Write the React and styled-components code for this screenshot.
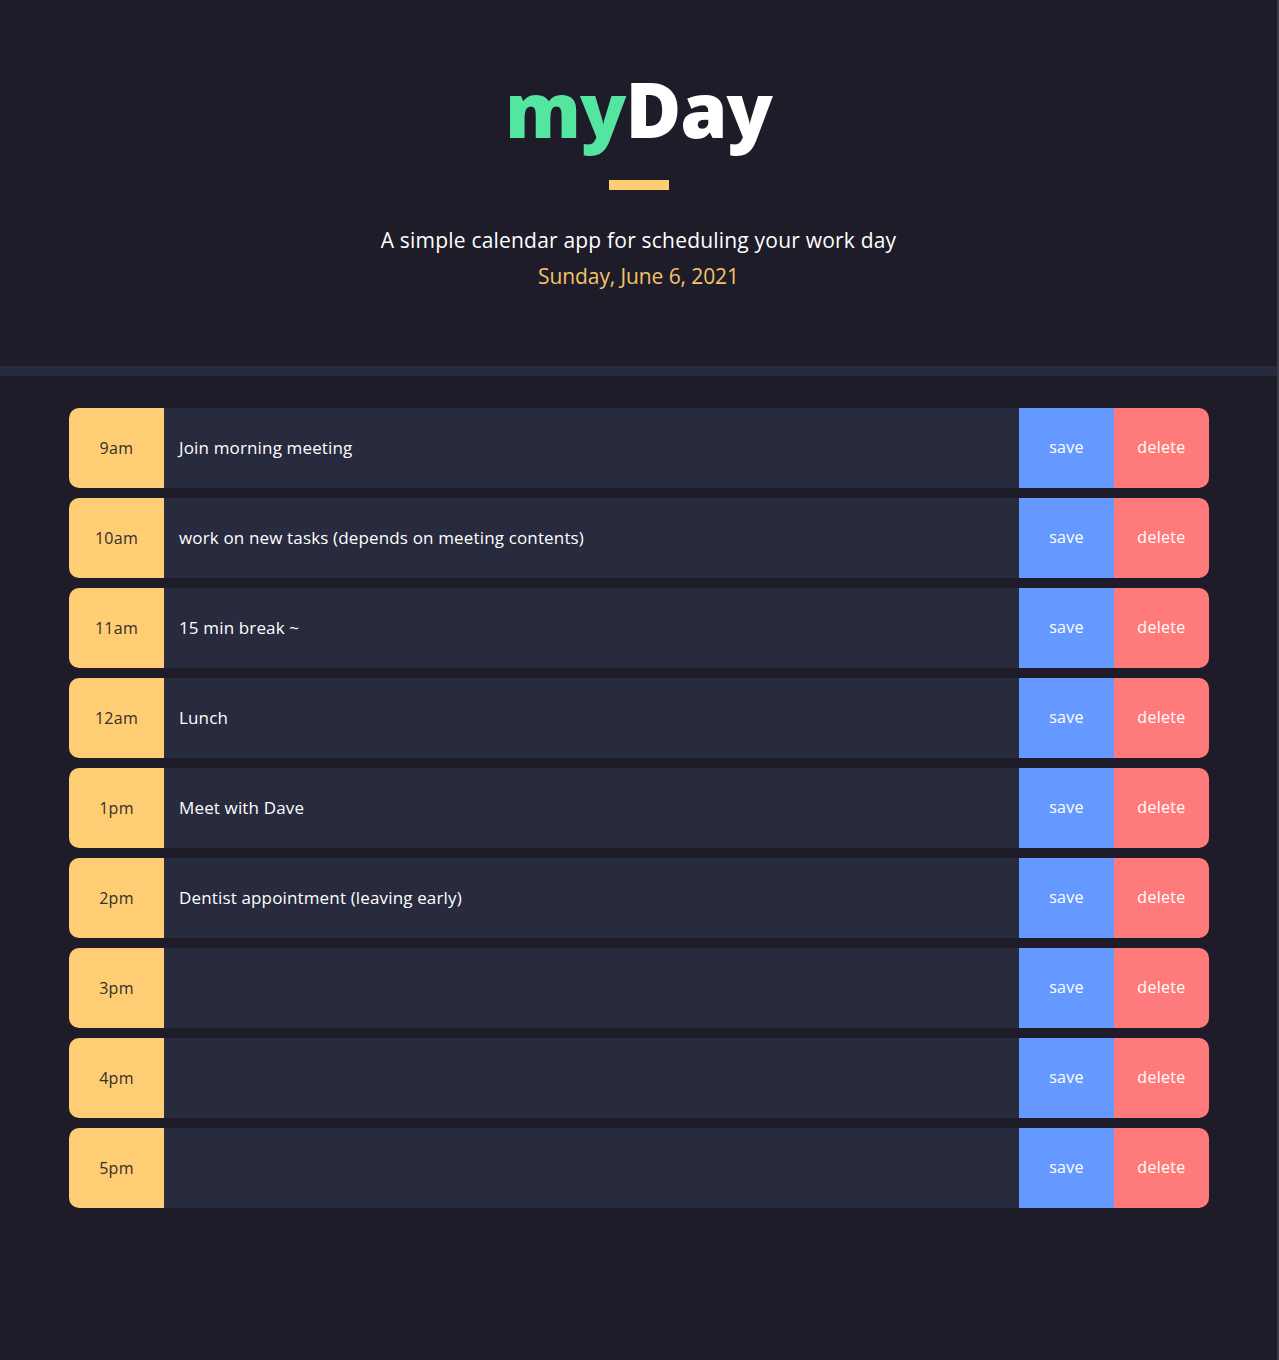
import React from "react";
import styled, { createGlobalStyle } from "styled-components";

const Global = createGlobalStyle`
  html, body { margin: 0; padding: 0; background: #1d1c28; }
  body { font-family: "Open Sans", "Liberation Sans", sans-serif; color: #fff; }
  * { box-sizing: border-box; }
`;

const Page = styled.div`
  min-height: 1360px;
  background: #1d1c28;
  border-right: 2px solid #3a3a44;
`;

const Header = styled.header`
  height: 376px;
  border-bottom: 10px solid #282a3e;
  display: flex;
  flex-direction: column;
  align-items: center;
  padding-top: 62px;
`;

const Title = styled.h1`
  margin: 0;
  font-family: "Open Sans", sans-serif;
  font-weight: 800;
  font-size: 76px;
  line-height: 94px;
  letter-spacing: -1px;
`;

const My = styled.span`
  color: #54e6a0;
`;

const Bar = styled.div`
  width: 60px;
  height: 10px;
  background: #ffcd74;
  margin-top: 24px;
`;

const Subtitle = styled.p`
  margin: 38px 0 0;
  font-size: 21px;
  line-height: 24px;
  letter-spacing: 0.2px;
  color: #fff;
`;

const DateLine = styled.p`
  margin: 12px 0 0;
  font-size: 21px;
  line-height: 24px;
  letter-spacing: -0.1px;
  color: #f6c26b;
`;

const Main = styled.main`
  padding: 32px 68px 0 69px;
  display: flex;
  flex-direction: column;
  gap: 10px;
`;

const Row = styled.div`
  display: flex;
  height: 80px;
  border-radius: 10px;
  overflow: hidden;
`;

const Hour = styled.div`
  width: 95px;
  flex: none;
  background: #ffcd74;
  color: #33302a;
  display: flex;
  align-items: center;
  justify-content: center;
  font-size: 16px;
  letter-spacing: 0.3px;
`;

const Task = styled.div`
  flex: 1;
  background: #282a3e;
  display: flex;
  align-items: center;
  padding-left: 15px;
  padding-bottom: 2px;
  font-size: 17px;
  font-weight: 500;
  letter-spacing: 0.15px;
  color: #fff;
`;

const Btn = styled.button`
  width: 95px;
  flex: none;
  border: none;
  background: ${(p) => (p.$kind === "delete" ? "#ff7b7b" : "#6699ff")};
  color: #fff;
  font-family: inherit;
  font-size: 16px;
  font-weight: 500;
  letter-spacing: 0.3px;
  padding: 0 0 2px;
`;

const rows = [
  ["9am", "Join morning meeting"],
  ["10am", "work on new tasks (depends on meeting contents)"],
  ["11am", "15 min break ~"],
  ["12am", "Lunch"],
  ["1pm", "Meet with Dave"],
  ["2pm", "Dentist appointment (leaving early)"],
  ["3pm", ""],
  ["4pm", ""],
  ["5pm", ""],
];

export default function App() {
  return (
    <Page>
      <Global />
      <Header>
        <Title>
          <My>my</My>Day
        </Title>
        <Bar />
        <Subtitle>A simple calendar app for scheduling your work day</Subtitle>
        <DateLine>Sunday, June 6, 2021</DateLine>
      </Header>
      <Main>
        {rows.map(([h, t]) => (
          <Row key={h}>
            <Hour>{h}</Hour>
            <Task>{t}</Task>
            <Btn $kind="save">save</Btn>
            <Btn $kind="delete">delete</Btn>
          </Row>
        ))}
      </Main>
    </Page>
  );
}
